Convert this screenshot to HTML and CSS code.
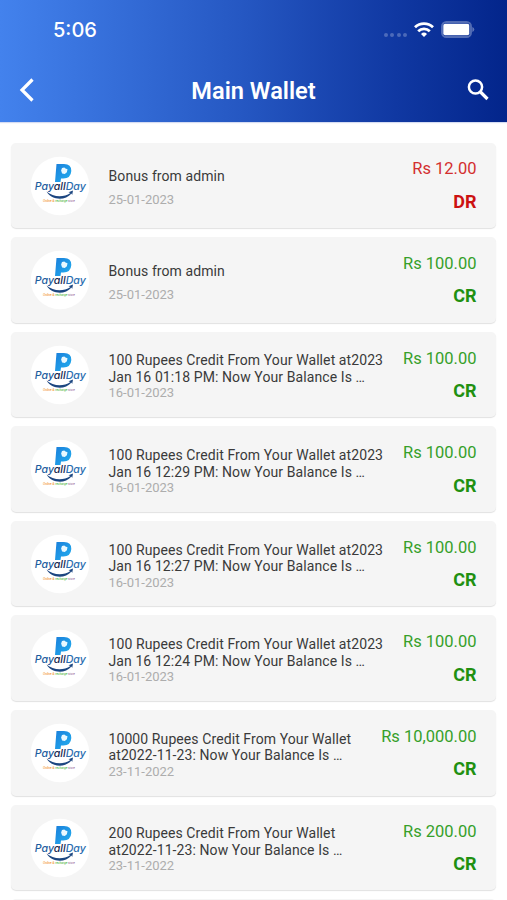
FILE: index.html
```html
<!DOCTYPE html>
<html lang="en">
<head>
    <meta charset="UTF-8">
    <meta name="viewport" content="width=device-width, initial-scale=1.0">
    <title>Main Wallet</title>
    <link rel="stylesheet" href="styles.css">
</head>
<body>
    <!-- Logo shared by all the rows -->
    <svg class="defs" width="0" height="0">
        <defs>
            <linearGradient id="p-fill" x1="0" y1="0" x2="1" y2="1">
                <stop offset="0" stop-color="#1b7fdb"/>
                <stop offset="1" stop-color="#22b0f0"/>
            </linearGradient>
            <symbol id="logo" viewBox="0 0 60 60">
                <circle cx="30" cy="30" r="29.3" fill="#fff"/>
                <path d="M26.500 8h7.500q7.500 0 7.300 7-.5 7.500-8 7.500h-2.300L30.500 26H25z" fill="url(#p-fill)"/>
                <path d="M32 12l2.300-.6 1.200 1.100 2 .8-.6 3-2.100 1.700-2.700-.4-1-3z" fill="#e8f8ff"/>
                <text class="logo-text" x="4.800" y="34" textLength="51" lengthAdjust="spacingAndGlyphs"><tspan fill="#1d5c9e">Pay</tspan><tspan fill="#17284f">all</tspan><tspan fill="#2a6db0">Day</tspan></text>
                <path d="M16.500 35.500C22 44.500 35 45 41.500 37.500l.7 1.500.8-4.500-4.500 1.700 2 .8C33 42 23 41 16.500 35.500z" fill="#1c4680"/>
                <text class="logo-tag" x="13" y="46.300" textLength="32" lengthAdjust="spacingAndGlyphs"><tspan fill="#f39a3c">Online &amp; </tspan><tspan fill="#62bd4c">recharge </tspan><tspan fill="#a67ba8">store</tspan></text>
            </symbol>
        </defs>
    </svg>

    <header class="header">
        <div class="status-bar">
            <span class="time">5:06</span>
            <div class="status-icons">
                <div class="signal"><i></i><i></i><i></i><i></i></div>
                <svg class="wifi" width="20" height="15" viewBox="0 0 20 15" fill="none" stroke="#fff" stroke-width="2.800">
                    <path d="M1 5.300a13 13 0 0 1 18 0"/>
                    <path d="M4.200 9.200a8.300 8.300 0 0 1 11.600 0"/>
                    <path d="M10 14.900l-3-3a4.300 4.300 0 0 1 6 0z" fill="#fff" stroke="none"/>
                </svg>
                <svg class="battery" width="34" height="17" viewBox="0 0 34 17">
                    <rect x="1" y="1" width="29" height="15" rx="4.500" fill="none" stroke="#fff" stroke-opacity=".3" stroke-width="2"/>
                    <rect x="2.300" y="2.800" width="26" height="11.400" rx="2" fill="#fff"/>
                    <path d="M31.300 6q2 .7 2 2.500t-2 2.500z" fill="#fff" fill-opacity=".35"/>
                </svg>
            </div>
        </div>
        <div class="nav-bar">
            <svg class="back" width="16" height="24" viewBox="0 0 16 24" fill="none" stroke="#fff" stroke-width="3.200">
                <path d="M13.500 1.500L3 12l10.500 10.500"/>
            </svg>
            <h1 class="title">Main Wallet</h1>
            <svg class="search" width="22" height="22" viewBox="0 0 22 22" fill="none" stroke="#fff" stroke-width="2.500">
                <circle cx="8.500" cy="8" r="6.600"/>
                <path d="M13 12.500l7.500 7.500" stroke-width="3.200"/>
            </svg>
        </div>
    </header>

    <main class="list">
        <div class="card short">
            <svg class="avatar"><use href="#logo"/></svg>
            <div class="info">
                <p class="desc">Bonus from admin</p>
                <p class="date">25-01-2023</p>
            </div>
            <div class="amount debit">
                <span class="value">Rs 12.00</span>
                <span class="type">DR</span>
            </div>
        </div>
        <div class="card short">
            <svg class="avatar"><use href="#logo"/></svg>
            <div class="info">
                <p class="desc">Bonus from admin</p>
                <p class="date">25-01-2023</p>
            </div>
            <div class="amount credit">
                <span class="value">Rs 100.00</span>
                <span class="type">CR</span>
            </div>
        </div>
        <div class="card">
            <svg class="avatar"><use href="#logo"/></svg>
            <div class="info">
                <p class="desc">100 Rupees Credit From Your Wallet at2023<br>Jan 16 01:18 PM: Now Your Balance Is …</p>
                <p class="date">16-01-2023</p>
            </div>
            <div class="amount credit">
                <span class="value">Rs 100.00</span>
                <span class="type">CR</span>
            </div>
        </div>
        <div class="card">
            <svg class="avatar"><use href="#logo"/></svg>
            <div class="info">
                <p class="desc">100 Rupees Credit From Your Wallet at2023<br>Jan 16 12:29 PM: Now Your Balance Is …</p>
                <p class="date">16-01-2023</p>
            </div>
            <div class="amount credit">
                <span class="value">Rs 100.00</span>
                <span class="type">CR</span>
            </div>
        </div>
        <div class="card">
            <svg class="avatar"><use href="#logo"/></svg>
            <div class="info">
                <p class="desc">100 Rupees Credit From Your Wallet at2023<br>Jan 16 12:27 PM: Now Your Balance Is …</p>
                <p class="date">16-01-2023</p>
            </div>
            <div class="amount credit">
                <span class="value">Rs 100.00</span>
                <span class="type">CR</span>
            </div>
        </div>
        <div class="card">
            <svg class="avatar"><use href="#logo"/></svg>
            <div class="info">
                <p class="desc">100 Rupees Credit From Your Wallet at2023<br>Jan 16 12:24 PM: Now Your Balance Is …</p>
                <p class="date">16-01-2023</p>
            </div>
            <div class="amount credit">
                <span class="value">Rs 100.00</span>
                <span class="type">CR</span>
            </div>
        </div>
        <div class="card">
            <svg class="avatar"><use href="#logo"/></svg>
            <div class="info">
                <p class="desc">10000 Rupees Credit From Your Wallet<br>at2022-11-23: Now Your Balance Is …</p>
                <p class="date">23-11-2022</p>
            </div>
            <div class="amount credit">
                <span class="value">Rs 10,000.00</span>
                <span class="type">CR</span>
            </div>
        </div>
        <div class="card">
            <svg class="avatar"><use href="#logo"/></svg>
            <div class="info">
                <p class="desc">200 Rupees Credit From Your Wallet<br>at2022-11-23: Now Your Balance Is …</p>
                <p class="date">23-11-2022</p>
            </div>
            <div class="amount credit">
                <span class="value">Rs 200.00</span>
                <span class="type">CR</span>
            </div>
        </div>
        <div class="card"></div>
    </main>
</body>
</html>
```
FILE: styles.css
```css
* {
    box-sizing: border-box;
}

body {
    margin: 0;
    height: 900px;
    overflow: hidden;
    background-color: #fff;
    font-family: Roboto, Arial, sans-serif;
}

.defs {
    display: block;
}

.header {
    height: 122px;
    background: linear-gradient(to right, #4382ed 0%, #2557c2 48%, #1038a2 78%, #03258b 100%);
    box-shadow: 0 1px 1px #d5dcf2;
    color: #fff;
}

.status-bar {
    display: flex;
    justify-content: space-between;
    height: 60px;
    padding: 0 32px 0 53px;
}

.time {
    font-family: Inter, sans-serif;
    font-size: 20px;
    font-weight: 500;
    line-height: 60px;
}

.status-icons {
    display: flex;
    align-items: center;
}

.signal {
    display: flex;
    gap: 2.500px;
    margin: 10px 7px 0 0;
}

.signal i {
    width: 4px;
    height: 4px;
    border-radius: 50%;
    background-color: rgba(255, 255, 255, 0.25);
}

.wifi {
    margin: 0 7px 1px 0;
}

.battery {
    margin-bottom: 1px;
}

.nav-bar {
    display: flex;
    align-items: center;
    justify-content: space-between;
    height: 60px;
    padding: 0 18px 0 19px;
}

.title {
    margin: 0;
    padding: 2px 0 0 5px;
    font-size: 23.600px;
    font-weight: 600;
}

.list {
    display: flex;
    flex-direction: column;
    gap: 9px;
    height: 778px;
    overflow: hidden;
    padding: 20.500px 11px 0;
}

.card {
    display: flex;
    flex: none;
    height: 85.600px;
    padding: 0 20px;
    border-radius: 5px;
    background-color: #f5f5f5;
    box-shadow: 0 1px 1px rgba(0, 0, 0, 0.12);
}

.avatar {
    flex: none;
    width: 60px;
    height: 60px;
    margin: 13.200px 18.500px 0 -1px;
}

.logo-text {
    font: italic 500 9.800px Inter, sans-serif;
}

.logo-tag {
    font: italic 600 2.800px Inter, sans-serif;
}

.info {
    flex: 1;
    padding-top: 20.800px;
    white-space: nowrap;
}

.desc {
    margin: 0;
    color: #3a3a3a;
    font-size: 14px;
    letter-spacing: 0.09px;
    line-height: 16.500px;
}

.date {
    margin: 0;
    color: #adadad;
    font-size: 13px;
    line-height: 15px;
}

.short .info {
    padding-top: 25.500px;
}

.short .date {
    margin-top: 7.500px;
}

.amount {
    display: flex;
    flex-direction: column;
    align-items: flex-end;
    margin-right: -0.500px;
    padding-top: 16.900px;
}

.value {
    font-size: 16.500px;
    line-height: 20px;
}

.type {
    margin-top: 11.400px;
    font-size: 18px;
    font-weight: 700;
    line-height: 22px;
}

.debit .value {
    color: #d32f2f;
}

.debit .type {
    color: #cc1111;
}

.credit .value {
    color: #36a02a;
}

.credit .type {
    color: #219010;
}
```
